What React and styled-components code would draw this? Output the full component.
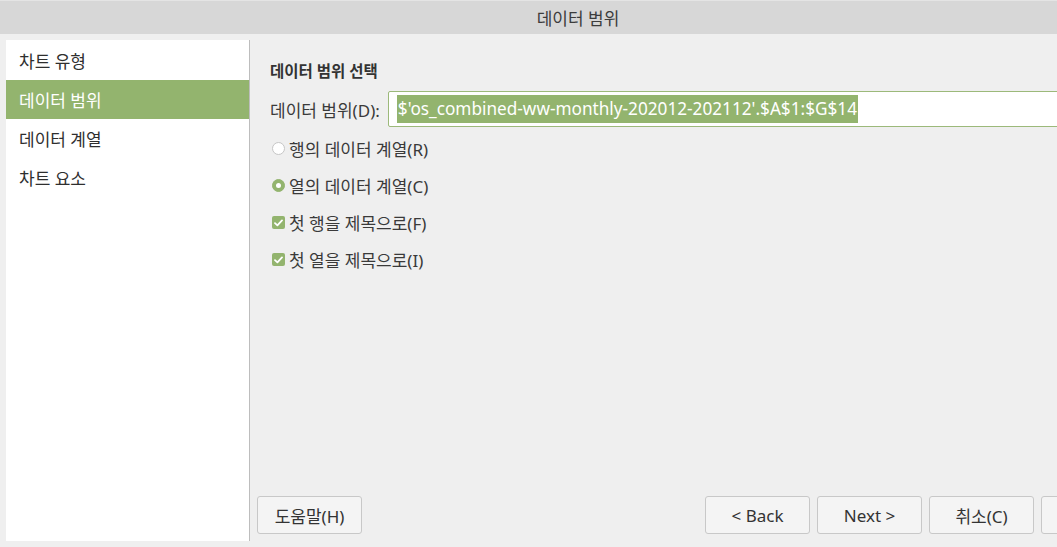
import React from "react";
import styled, { createGlobalStyle } from "styled-components";

const GREEN = "#93b46e";

const Global = createGlobalStyle`
  html, body { margin: 0; padding: 0; overflow: hidden; background: #efefef; }
  body {
    font-family: "Noto Sans", "Noto Sans CJK KR", sans-serif;
    font-size: 17px;
    color: #3a3a3a;
  }
`;

const Window = styled.div`
  width: 1156px;
  height: 547px;
  display: flex;
  flex-direction: column;
  background: #efefef;
`;

const TitleBar = styled.div`
  height: 33px;
  border-top: 1px solid #e4e4e4;
  background: #d7d7d7;
  display: flex;
  align-items: center;
  justify-content: center;
  font-size: 17px;
  color: #3c3c3c;
`;

const Body = styled.div`
  flex: 1;
  display: flex;
  padding: 6px 0 6px 6px;
  min-height: 0;
`;

const Sidebar = styled.ul`
  list-style: none;
  margin: 0;
  padding: 1px 0 0;
  width: 243px;
  background: #fff;
  border-right: 1px solid #bdbdbd;
`;

const NavItem = styled.li`
  height: 39px;
  display: flex;
  align-items: center;
  padding-left: 13px;
  font-size: 17px;
  color: ${(p) => (p.$active ? "#fff" : "#2f2f2f")};
  background: ${(p) => (p.$active ? GREEN : "transparent")};
`;

const Main = styled.div`
  flex: 1;
  display: flex;
  flex-direction: column;
  padding: 0 10px 1px 7px;
  min-width: 0;
`;

const Content = styled.div`
  flex: 1;
  display: flex;
  flex-direction: column;
  padding: 19px 0 0 13px;
`;

const Heading = styled.div`
  font-weight: 700;
  font-size: 15.5px;
  color: #333;
  height: 24px;
  line-height: 24px;
`;

const FieldRow = styled.div`
  display: flex;
  align-items: center;
  gap: 8px;
  margin-top: 8px;
`;

const Label = styled.span`
  font-size: 17px;
  white-space: nowrap;
`;

const Input = styled.div`
  flex: 1;
  height: 34px;
  border: 1px solid #9cb97a;
  border-radius: 2px;
  background: #fff;
  display: flex;
  align-items: center;
  padding-left: 8px;
  white-space: nowrap;
  overflow: hidden;
`;

const Selected = styled.span`
  background: ${GREEN};
  color: #fff;
  font-size: 17.2px;
  line-height: 28px;
  padding: 0 1px;
`;

const Option = styled.label`
  display: flex;
  align-items: center;
  gap: 4px;
  height: 37px;
  padding-left: 2px;
  font-size: 17px;
  &:first-of-type { margin-top: 3px; }
`;

const Radio = styled.span`
  width: 13px;
  height: 13px;
  border-radius: 50%;
  box-sizing: border-box;
  border: 1px solid ${(p) => (p.$on ? GREEN : "#c6c6c6")};
  background: ${(p) => (p.$on ? GREEN : "#fff")};
  display: flex;
  align-items: center;
  justify-content: center;
  flex-shrink: 0;
  &::after {
    content: "";
    width: 5px;
    height: 5px;
    border-radius: 50%;
    background: #fff;
    display: ${(p) => (p.$on ? "block" : "none")};
  }
`;

const Check = styled.span`
  width: 13px;
  height: 13px;
  border-radius: 2px;
  background: ${GREEN};
  display: flex;
  align-items: center;
  justify-content: center;
  flex-shrink: 0;
`;

const Footer = styled.div`
  display: flex;
  align-items: center;
  gap: 7px;
  padding-bottom: 6px;
`;

const Spacer = styled.div`
  flex: 1;
`;

const Button = styled.button`
  width: 105px;
  height: 38px;
  box-sizing: border-box;
  border: 1px solid #c8c8c8;
  border-radius: 3px;
  background: #f4f4f4;
  font-family: inherit;
  font-size: 17px;
  color: #333;
  padding: 0;
`;

const CheckMark = () => (
  <svg width="9" height="8" viewBox="0 0 9 8">
    <path d="M1 4.2 L3.4 6.4 L8 1.4" fill="none" stroke="#fff" strokeWidth="1.8" strokeLinecap="round" strokeLinejoin="round" />
  </svg>
);

export default function App() {
  const nav = ["차트 유형", "데이터 범위", "데이터 계열", "차트 요소"];
  return (
    <>
      <Global />
      <Window>
        <TitleBar>데이터 범위</TitleBar>
        <Body>
          <Sidebar>
            {nav.map((n, i) => (
              <NavItem key={n} $active={i === 1}>{n}</NavItem>
            ))}
          </Sidebar>
          <Main>
            <Content>
              <Heading>데이터 범위 선택</Heading>
              <FieldRow>
                <Label>데이터 범위(D):</Label>
                <Input>
                  <Selected>$'os_combined-ww-monthly-202012-202112'.$A$1:$G$14</Selected>
                </Input>
              </FieldRow>
              <Option><Radio />행의 데이터 계열(R)</Option>
              <Option><Radio $on />열의 데이터 계열(C)</Option>
              <Option><Check><CheckMark /></Check>첫 행을 제목으로(F)</Option>
              <Option><Check><CheckMark /></Check>첫 열을 제목으로(I)</Option>
            </Content>
            <Footer>
              <Button>도움말(H)</Button>
              <Spacer />
              <Button>&lt; Back</Button>
              <Button>Next &gt;</Button>
              <Button>취소(C)</Button>
              <Button aria-label="마침(F)" />
            </Footer>
          </Main>
        </Body>
      </Window>
    </>
  );
}
